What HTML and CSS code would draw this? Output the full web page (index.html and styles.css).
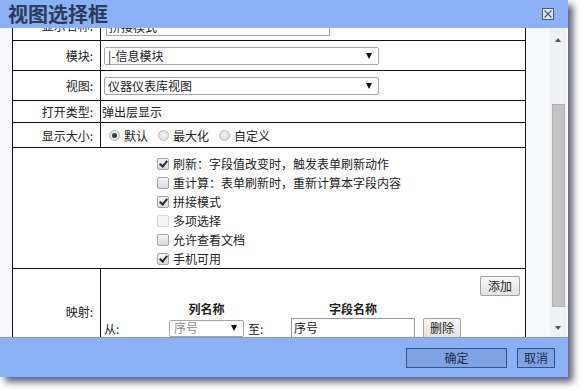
FILE: index.html
```html
<!DOCTYPE html>
<html lang="zh">
<head>
<meta charset="utf-8">
<link rel="stylesheet" href="styles.css">
</head>
<body>
<div class="dialog">
  <div class="titlebar">
    <span class="title">视图选择框</span>
    <span class="close"><svg width="12" height="12" viewBox="0 0 12 12"><rect x="0.5" y="0.5" width="11" height="11" fill="#dde4f2" stroke="#4e5a76"/><path d="M2.5 2.5 L9.5 9.5 M9.5 2.5 L2.5 9.5" stroke="#4e5a76" stroke-width="1.2"/></svg></span>
  </div>
  <div class="body">
    <div class="scroll">
      <div class="form">
        <div class="row r0">
          <div class="lbl">显示名称:</div>
          <div class="val"><div class="input in-top">拼接模式</div></div>
        </div>
        <div class="row r30">
          <div class="lbl">模块:</div>
          <div class="val"><div class="select sel-wide"><span>|-信息模块</span><i class="caret"></i></div></div>
        </div>
        <div class="row r30">
          <div class="lbl">视图:</div>
          <div class="val"><div class="select sel-wide"><span>仪器仪表库视图</span><i class="caret"></i></div></div>
        </div>
        <div class="row r22">
          <div class="lbl">打开类型:</div>
          <div class="val plain">弹出层显示</div>
        </div>
        <div class="row r25">
          <div class="lbl">显示大小:</div>
          <div class="val radios">
            <span class="ropt"><span class="radio on"></span>默认</span>
            <span class="ropt"><span class="radio"></span>最大化</span>
            <span class="ropt"><span class="radio"></span>自定义</span>
          </div>
        </div>
        <div class="row rchecks">
          <div class="checks">
            <div class="check"><span class="cb on"></span>刷新：字段值改变时，触发表单刷新动作</div>
            <div class="check"><span class="cb"></span>重计算：表单刷新时，重新计算本字段内容</div>
            <div class="check"><span class="cb on"></span>拼接模式</div>
            <div class="check"><span class="cb dis"></span>多项选择</div>
            <div class="check"><span class="cb"></span>允许查看文档</div>
            <div class="check"><span class="cb on"></span>手机可用</div>
          </div>
        </div>
        <div class="row rmap">
          <div class="lbl">映射:</div>
          <div class="val mapval">
            <div class="addrow"><button class="gbtn add">添加</button></div>
            <div class="maptable">
              <div class="mh"></div>
              <div class="mh bold">列名称</div>
              <div class="mh"></div>
              <div class="mh bold">字段名称</div>
              <div class="mh"></div>
              <div class="mc from">从:</div>
              <div class="mc"><div class="select sel-map"><span>序号</span><i class="caret"></i></div></div>
              <div class="mc to">至:</div>
              <div class="mc"><div class="input in-map">序号</div></div>
              <div class="mc"><button class="gbtn del">删除</button></div>
            </div>
          </div>
        </div>
      </div>
    </div>
    <div class="vbar">
      <span class="arrow up"></span>
      <span class="thumb"></span>
      <span class="arrow down"></span>
    </div>
  </div>
  <div class="footer">
    <button class="fbtn ok">确定</button>
    <button class="fbtn cancel">取消</button>
  </div>
</div>
</body>
</html>
```
FILE: styles.css
```css
html, body {
  margin: 0;
  padding: 0;
  background: #ffffff;
}
body {
  width: 587px;
  height: 391px;
  overflow: hidden;
  font-family: "Noto Sans CJK SC", "Liberation Sans", sans-serif;
  font-size: 12px;
  color: #222;
}
.dialog {
  width: 568px;
  height: 377px;
  display: flex;
  flex-direction: column;
  background: #8cb0f6;
  box-shadow: 5px 5px 7px rgba(40, 40, 70, 0.75);
}
.titlebar {
  height: 28px;
  flex: none;
  display: flex;
  align-items: center;
  justify-content: space-between;
  padding: 0 14px 0 8px;
  background: #8cb0f6;
  border-bottom: 1px solid #9db4d8;
  box-sizing: border-box;
}
.title {
  font-size: 20px;
  font-weight: bold;
  color: #2b3b5a;
  line-height: 20px;
}
.close {
  display: flex;
  width: 12px;
  height: 12px;
}
.body {
  height: 310px;
  flex: none;
  display: flex;
  background: #f6f8fc;
  border-bottom: 1px solid #7b98cf;
  box-sizing: border-box;
}
.scroll {
  flex: 1;
  overflow: hidden;
  padding-left: 12px;
}
.form {
  width: 514px;
  margin-top: -17px;
  background: #fff;
  border-left: 1px solid #111;
  border-right: 1px solid #111;
  box-sizing: border-box;
}
.row {
  display: flex;
  border-bottom: 1px solid #111;
  box-sizing: border-box;
}
.r0, .r30 { height: 30px; }
.r22 { height: 22px; }
.r25 { height: 25px; }
.rchecks { height: 121px; }
.rmap { height: 84px; border-bottom: none; }
.lbl {
  width: 88px;
  flex: none;
  border-right: 1px solid #111;
  box-sizing: border-box;
  display: flex;
  align-items: center;
  justify-content: flex-end;
  padding-right: 7px;
  color: #222;
}
.val {
  flex: 1;
  display: flex;
  align-items: center;
  padding-left: 3px;
}
.val.plain { padding-left: 1px; }
.input {
  height: 18px;
  box-sizing: border-box;
  border: 1px solid #a8a8a8;
  background: #fff;
  display: flex;
  align-items: center;
  padding-left: 2px;
  line-height: 14px;
}
.in-top { width: 224px; margin-left: 2px; margin-top: 2px; }
.select {
  height: 18px;
  box-sizing: border-box;
  border: 1px solid #a5a5a5;
  border-radius: 2px;
  background: #fff;
  display: flex;
  align-items: center;
  justify-content: space-between;
  padding: 0 6px 0 3px;
  line-height: 14px;
}
.sel-wide { width: 275px; }
.caret {
  width: 0;
  height: 0;
  border-left: 3.5px solid transparent;
  border-right: 3.5px solid transparent;
  border-top: 6px solid #111;
}
.radios { padding-left: 8px; }
.ropt {
  flex: none;
  display: flex;
  align-items: center;
  white-space: nowrap;
  margin-right: 10px;
}
.radio {
  width: 11px;
  height: 11px;
  flex: none;
  box-sizing: border-box;
  border-radius: 50%;
  border: 1px solid #b9b9b9;
  background: radial-gradient(circle at 50% 40%, #f4f4f4 0%, #d6d6d6 100%);
  display: inline-flex;
  align-items: center;
  justify-content: center;
  margin-right: 4px;
}
.radio.on::after {
  content: "";
  width: 5px;
  height: 5px;
  border-radius: 50%;
  background: #3a3a3a;
}
.checks {
  padding: 7px 0 0 144px;
  display: flex;
  flex-direction: column;
}
.check {
  height: 19px;
  display: flex;
  align-items: center;
  line-height: 14px;
}
.cb {
  width: 12px;
  height: 12px;
  box-sizing: border-box;
  border: 1px solid #a4a4a4;
  border-radius: 2px;
  background: linear-gradient(#f6f6f6, #d9d9d9);
  margin-right: 4px;
  position: relative;
}
.cb.on::after {
  content: "";
  position: absolute;
  left: 3px;
  top: 0px;
  width: 3px;
  height: 6px;
  border-right: 2px solid #2a2a2a;
  border-bottom: 2px solid #2a2a2a;
  transform: rotate(40deg);
}
.cb.dis {
  border-color: #d8d8d8;
  background: #f4f4f4;
}
.mapval {
  flex-direction: column;
  align-items: stretch;
  padding-left: 0;
}
.addrow {
  display: flex;
  justify-content: flex-end;
  padding: 7px 5px 0 0;
}
.gbtn {
  font-family: inherit;
  font-size: 12px;
  color: #222;
  height: 20px;
  box-sizing: border-box;
  border: 1px solid #a2a2a2;
  border-radius: 2px;
  background: linear-gradient(#f8f8f8, #e2e2e2);
  padding: 0;
  line-height: 16px;
}
.add { width: 40px; }
.del { width: 38px; margin-left: 8px; }
.maptable {
  display: grid;
  grid-template-columns: 68px 75px 47px 124px 60px;
  grid-template-rows: 22px 20px;
  align-items: center;
}
.mh { text-align: center; align-self: end; line-height: 16px; padding-bottom: 1px; }
.bold { font-weight: bold; color: #222; }
.from { padding-left: 3px; }
.to { padding-left: 4px; }
.sel-map { width: 75px; height: 17px; color: #8a8a8a; padding-left: 4px; }
.in-map { width: 124px; height: 20px; border-color: #999; }
.vbar {
  width: 16px;
  flex: none;
  margin-right: 2px;
  background: #eff0f2;
  display: flex;
  flex-direction: column;
  align-items: center;
  padding: 10px 0 7px;
  box-sizing: border-box;
}
.arrow {
  width: 0;
  height: 0;
  border-left: 3.5px solid transparent;
  border-right: 3.5px solid transparent;
}
.arrow.up { border-bottom: 4px solid #555; }
.arrow.down { border-top: 4px solid #555; margin-top: auto; }
.thumb {
  width: 13px;
  height: 203px;
  margin-top: 62px;
  box-sizing: border-box;
  background: #c2c2c2;
  border: 1px solid #b0b0b0;
}
.footer {
  flex: 1;
  display: flex;
  align-items: center;
  justify-content: flex-end;
  gap: 10px;
  padding-right: 13px;
  background: #8cb0f6;
}
.fbtn {
  font-family: inherit;
  font-size: 12px;
  color: #1e2a44;
  height: 20px;
  box-sizing: border-box;
  border: 1px solid #34548f;
  background: #7fa2e4;
  padding: 0;
  line-height: 16px;
}
.ok { width: 101px; }
.cancel { width: 38px; }
```
